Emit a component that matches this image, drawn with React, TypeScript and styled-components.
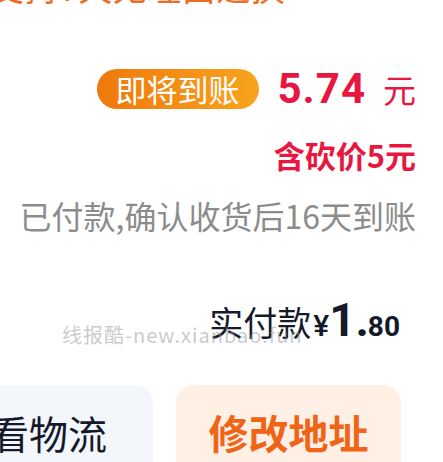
import React from "react";
import styled, { createGlobalStyle } from "styled-components";

const Global = createGlobalStyle`
  html, body { margin: 0; padding: 0; background: #ffffff; }
  body { font-family: "Noto Sans CJK SC", "Noto Sans", sans-serif; overflow: hidden; }
`;

const Page = styled.div`
  position: relative;
  width: 443px;
  height: 462px;
  overflow: hidden;
  display: flex;
  flex-direction: column;
  align-items: stretch;
`;

const TopNote = styled.div`
  margin-top: -30px;
  margin-left: -10px;
  font-size: 34px;
  line-height: 34px;
  color: #f06a22;
  white-space: nowrap;
  letter-spacing: 0.5px;
`;

const RightRow = styled.div<{ $mt: number }>`
  display: flex;
  justify-content: flex-end;
  align-items: center;
  padding-right: 27px;
  margin-top: ${(p) => p.$mt}px;
  white-space: nowrap;
`;

const Badge = styled.div`
  height: 40px;
  padding: 0 19px;
  border-radius: 20px;
  background: linear-gradient(90deg, #ef780c 0%, #f9a41e 100%);
  color: #ffffff;
  font-size: 31px;
  line-height: 40px;
  display: flex;
  align-items: center;
  margin-right: 19px;
`;

const Amount = styled.span`
  font-family: "Roboto", "Noto Sans CJK SC", sans-serif;
  font-weight: 700;
  font-size: 42px;
  line-height: 44px;
  color: #e8173f;
  letter-spacing: 1px;
`;

const Unit = styled.span`
  font-size: 33px;
  line-height: 44px;
  color: #e8173f;
  margin-left: 17px;
`;

const Discount = styled.div`
  font-size: 31px;
  line-height: 34px;
  font-weight: 700;
  color: #e8173f;
`;

const Hint = styled.div`
  font-size: 32px;
  line-height: 36px;
  color: #8c8c8c;
`;

const PaidRow = styled.div`
  display: flex;
  justify-content: flex-end;
  align-items: baseline;
  padding-right: 43px;
  margin-top: 65px;
  color: #151a2b;
  white-space: nowrap;
`;

const PaidLabel = styled.span`
  font-size: 34px;
  line-height: 44px;
`;

const Yen = styled.span`
  font-family: "Roboto", "Noto Sans CJK SC", sans-serif;
  font-size: 30px;
  font-weight: 500;
  margin-left: 2px;
`;

const Big = styled.span`
  font-family: "Roboto", "Noto Sans CJK SC", sans-serif;
  font-size: 46px;
  font-weight: 700;
  line-height: 44px;
`;

const Small = styled.span`
  font-family: "Roboto", "Noto Sans CJK SC", sans-serif;
  font-size: 28px;
  font-weight: 700;
  margin-left: -1px;
`;

const Watermark = styled.div`
  position: absolute;
  left: 62px;
  top: 323px;
  font-size: 20px;
  line-height: 24px;
  color: rgba(150, 150, 150, 0.5);
  white-space: nowrap;
  letter-spacing: 1px;
`;

const Actions = styled.div`
  display: flex;
  gap: 23px;
  margin-top: 41px;
  margin-left: -95px;
`;

const ActionButton = styled.div<{ $primary?: boolean }>`
  width: ${(p) => (p.$primary ? 225 : 248)}px;
  height: 100px;
  flex: none;
  border-radius: 18px;
  background: ${(p) => (p.$primary ? "#fff0e5" : "#f3f6fa")};
  color: ${(p) => (p.$primary ? "#f06418" : "#151a2b")};
  font-size: ${(p) => (p.$primary ? 40 : 39)}px;
  font-weight: ${(p) => (p.$primary ? 700 : 400)};
  display: flex;
  justify-content: center;
  padding-top: 25px;
  box-sizing: border-box;
  line-height: 44px;
  white-space: nowrap;
`;

export default function App() {
  return (
    <>
      <Global />
      <Page>
        <TopNote>支持7天无理由退换</TopNote>
        <RightRow $mt={63}>
          <Badge>即将到账</Badge>
          <Amount>5.74</Amount>
          <Unit>元</Unit>
        </RightRow>
        <RightRow $mt={27}>
          <Discount>含砍价5元</Discount>
        </RightRow>
        <RightRow $mt={25}>
          <Hint>已付款,确认收货后16天到账</Hint>
        </RightRow>
        <PaidRow>
          <PaidLabel>实付款</PaidLabel>
          <Yen>¥</Yen>
          <Big>1.</Big>
          <Small>80</Small>
        </PaidRow>
        <Watermark>线报酷-new.xianbao.fun</Watermark>
        <Actions>
          <ActionButton>查看物流</ActionButton>
          <ActionButton $primary>修改地址</ActionButton>
        </Actions>
      </Page>
    </>
  );
}
